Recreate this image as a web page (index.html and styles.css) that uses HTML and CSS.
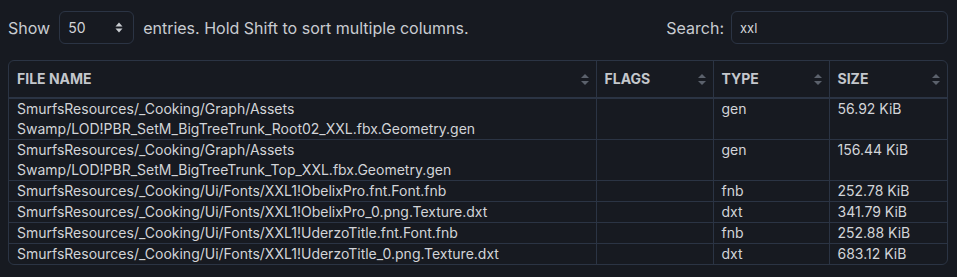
FILE: index.html
```html
<!DOCTYPE html>
<html>
<head>
<meta charset="utf-8">
<link rel="stylesheet" href="styles.css">
</head>
<body>
<div class="wrap">
  <div class="controls">
    <div class="length">
      <span>Show</span>
      <div class="select"><span>50</span>
        <svg class="caret" width="8" height="11" viewBox="0 0 8 11"><path d="M4 0.5 L7.5 4.5 H0.5 Z M4 10.5 L7.5 6.5 H0.5 Z" fill="#c9ccd1"/></svg>
      </div>
      <span>entries. Hold Shift to sort multiple columns.</span>
    </div>
    <div class="search">
      <span>Search:</span>
      <div class="input">xxl</div>
    </div>
  </div>
  <div class="table-box">
    <table>
      <colgroup>
        <col class="c-name"><col class="c-flags"><col class="c-type"><col class="c-size">
      </colgroup>
      <thead>
        <tr>
          <th><div class="th">FILE NAME<i class="sort"></i></div></th>
          <th><div class="th">FLAGS<i class="sort"></i></div></th>
          <th><div class="th">TYPE<i class="sort"></i></div></th>
          <th><div class="th">SIZE<i class="sort"></i></div></th>
        </tr>
      </thead>
      <tbody>
        <tr><td>SmurfsResources/_Cooking/Graph/Assets Swamp/LOD!PBR_SetM_BigTreeTrunk_Root02_XXL.fbx.Geometry.gen</td><td></td><td>gen</td><td>56.92 KiB</td></tr>
        <tr><td>SmurfsResources/_Cooking/Graph/Assets Swamp/LOD!PBR_SetM_BigTreeTrunk_Top_XXL.fbx.Geometry.gen</td><td></td><td>gen</td><td>156.44 KiB</td></tr>
        <tr><td>SmurfsResources/_Cooking/Ui/Fonts/XXL1!ObelixPro.fnt.Font.fnb</td><td></td><td>fnb</td><td>252.78 KiB</td></tr>
        <tr><td>SmurfsResources/_Cooking/Ui/Fonts/XXL1!ObelixPro_0.png.Texture.dxt</td><td></td><td>dxt</td><td>341.79 KiB</td></tr>
        <tr><td>SmurfsResources/_Cooking/Ui/Fonts/XXL1!UderzoTitle.fnt.Font.fnb</td><td></td><td>fnb</td><td>252.88 KiB</td></tr>
        <tr><td>SmurfsResources/_Cooking/Ui/Fonts/XXL1!UderzoTitle_0.png.Texture.dxt</td><td></td><td>dxt</td><td>683.12 KiB</td></tr>
      </tbody>
    </table>
  </div>
</div>
</body>
</html>
```

FILE: styles.css
```css
html, body {
  margin: 0;
  padding: 0;
  background: #171a21;
}
body {
  font-family: Inter, "Noto Sans", sans-serif;
  color: #d2d4d8;
}
.wrap {
  padding: 11px 9px 0 8px;
}
.controls {
  display: flex;
  justify-content: space-between;
  align-items: center;
  height: 33px;
}
.length, .search {
  display: flex;
  align-items: center;
  font-size: 16px;
  color: #c9ccd1;
}
.select {
  box-sizing: border-box;
  width: 75px;
  height: 33px;
  margin: 0 9px 0 9px;
  border: 1px solid #2b3444;
  border-radius: 6px;
  display: flex;
  align-items: center;
  justify-content: space-between;
  padding: 0 10px 0 8px;
  font-size: 14px;
  color: #d2d4d8;
}
.caret { display: block; }
.search .input {
  box-sizing: border-box;
  width: 217px;
  height: 33px;
  margin-left: 7px;
  border: 1px solid #2b3444;
  border-radius: 6px;
  display: flex;
  align-items: center;
  padding: 0 8px;
  font-size: 13px;
  color: #d2d4d8;
}
.table-box {
  margin-top: 16px;
  border: 1px solid #2b3444;
  border-radius: 6px;
  overflow: hidden;
}
table {
  width: 100%;
  border-collapse: collapse;
  table-layout: fixed;
  font-size: 14px;
  line-height: 20px;
}
.c-name { width: 587px; }
.c-flags { width: 117px; }
.c-type { width: 116px; }
.c-size { width: auto; }
th, td {
  border-left: 1px solid #2b3444;
  text-align: left;
  vertical-align: top;
}
th:first-child, td:first-child { border-left: none; }
th {
  padding: 8px 7px 8px 8px;
  border-bottom: 2px solid #2b3444;
  font-weight: 700;
  color: #c4c7cc;
}
.th {
  display: flex;
  justify-content: space-between;
  align-items: center;
}
.sort {
  display: block;
  width: 8px;
  height: 11px;
  position: relative;
}
.sort::before, .sort::after {
  content: "";
  position: absolute;
  left: 0;
  border-left: 4px solid transparent;
  border-right: 4px solid transparent;
}
.sort::before {
  top: 0;
  border-bottom: 4.5px solid #5b616c;
}
.sort::after {
  bottom: 0;
  border-top: 4.5px solid #5b616c;
}
td {
  padding: 0 8px;
  border-top: 1px solid #2b3444;
  color: #d2d4d8;
}
tbody tr:first-child td { border-top: none; }
```
